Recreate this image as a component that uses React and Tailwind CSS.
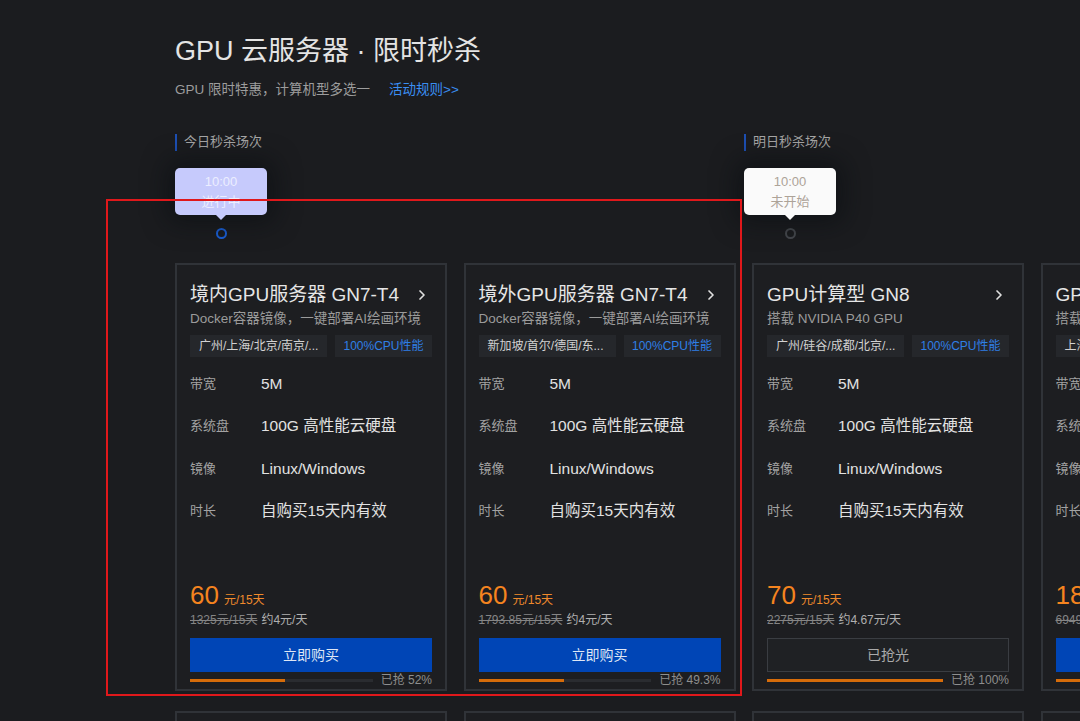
import React from 'react';
import { ChevronRight } from 'lucide-react';

const FONT = { fontFamily: '"Liberation Sans", "Noto Sans CJK SC", sans-serif' };

const cards = [
  {
    title: '境内GPU服务器 GN7-T4',
    desc: 'Docker容器镜像，一键部署AI绘画环境',
    region: '广州/上海/北京/南京/...',
    price: '60',
    old: '1325元/15天',
    daily: '约4元/天',
    pct: 52,
    pctText: '52%',
    soldOut: false,
  },
  {
    title: '境外GPU服务器 GN7-T4',
    desc: 'Docker容器镜像，一键部署AI绘画环境',
    region: '新加坡/首尔/德国/东...',
    price: '60',
    old: '1793.85元/15天',
    daily: '约4元/天',
    pct: 49.3,
    pctText: '49.3%',
    soldOut: false,
  },
  {
    title: 'GPU计算型 GN8',
    desc: '搭载 NVIDIA P40 GPU',
    region: '广州/硅谷/成都/北京/...',
    price: '70',
    old: '2275元/15天',
    daily: '约4.67元/天',
    pct: 100,
    pctText: '100%',
    soldOut: true,
  },
  {
    title: 'GPU计算型 GN10Xp',
    desc: '搭载 NVIDIA V100 GPU',
    region: '上海/北京/广州/南京/...',
    price: '188',
    old: '6949元/15天',
    daily: '约12.5元/天',
    pct: 40,
    pctText: '40%',
    soldOut: false,
  },
];

const specs = [
  ['带宽', '5M'],
  ['系统盘', '100G 高性能云硬盘'],
  ['镜像', 'Linux/Windows'],
  ['时长', '自购买15天内有效'],
];

const Card = ({ c }) => (
  <div className="w-[272px] h-[428px] shrink-0 border-2 border-[#303338] bg-[#1d1e21] px-[13px] pt-[17px] pb-[1px] flex flex-col overflow-hidden">
    <div className="flex items-center justify-between h-[26px]">
      <span className="text-[19px] text-[#e6e6e6] whitespace-nowrap">{c.title}</span>
      <ChevronRight className="w-[16px] h-[16px] text-[#e0e0e0] mr-[2px] shrink-0" strokeWidth={2.5} />
    </div>
    <div className="mt-[1px] h-[20px] leading-[20px] text-[13.5px] text-[#9b9b9b] whitespace-nowrap">{c.desc}</div>
    <div className="flex gap-[8px] mt-[6px]">
      <div className="w-[137px] h-[22px] shrink-0 bg-[#25272b] text-[12px] text-[#d2d2d2] flex items-center px-[9px] whitespace-nowrap overflow-hidden">
        {c.region}
      </div>
      <div className="w-[97px] h-[22px] shrink-0 bg-[#25272b] text-[12px] text-[#2f7fe6] flex items-center justify-center whitespace-nowrap">
        100%CPU性能
      </div>
    </div>
    <div className="mt-[5px] flex flex-col">
      {specs.map(([k, v]) => (
        <div key={k} className="h-[42.5px] flex items-center">
          <span className="w-[71px] text-[13px] text-[#a3a3a3]">{k}</span>
          <span className="text-[15.5px] text-[#e2e2e2] whitespace-nowrap">{v}</span>
        </div>
      ))}
    </div>
    <div className="mt-auto">
      <div className="flex items-baseline gap-[5px] h-[30px]">
        <span className="text-[26px] leading-[30px] text-[#f5841f]">{c.price}</span>
        <span className="text-[12px] text-[#f08a2c]">元/15天</span>
      </div>
      <div className="h-[20px] flex items-center text-[12px] gap-[4px] whitespace-nowrap">
        <span className="line-through text-[#858585]">{c.old}</span>
        <span className="text-[#b0b0b0]">{c.daily}</span>
      </div>
      {c.soldOut ? (
        <div className="mt-[8px] h-[34px] border border-[#3a3d42] bg-[#1f2124] text-[14px] text-[#aaaaaa] flex items-center justify-center">
          已抢光
        </div>
      ) : (
        <div className="mt-[8px] h-[34px] bg-[#0045b6] text-[14px] text-[#dfe6f5] flex items-center justify-center">
          立即购买
        </div>
      )}
      <div className="h-[16px] flex items-center gap-[8px]">
        <div className="flex-1 h-[3px] bg-[#2a2c30]">
          <div className="h-full bg-[#d66c0a]" style={{ width: `${c.pct}%` }} />
        </div>
        <span className="text-[12px] text-[#8e8e8e] whitespace-nowrap">已抢 {c.pctText}</span>
      </div>
    </div>
  </div>
);

const Bubble = ({ time, label, active }) => (
  <div className="flex flex-col items-center w-[92px]">
    <div
      className={`relative w-[92px] h-[47px] rounded-[5px] flex flex-col items-center justify-center text-[13px] leading-[20px] shadow-[0_0_24px_8px_rgba(10,12,16,0.55)] ${
        active ? 'bg-[#c6cafc] text-[#eceeff]' : 'bg-[#fafafa] text-[#ada398]'
      }`}
    >
      <span>{time}</span>
      <span>{label}</span>
      <div
        className={`absolute left-1/2 -bottom-[5px] -ml-[5px] w-0 h-0 border-l-[5px] border-r-[5px] border-t-[5px] border-l-transparent border-r-transparent ${
          active ? 'border-t-[#c6cafc]' : 'border-t-[#fafafa]'
        }`}
      />
    </div>
    <div
      className={`mt-[13px] w-[11px] h-[11px] rounded-full border-2 ${
        active ? 'border-[#1a5fd6]' : 'border-[#45484d]'
      }`}
    />
  </div>
);

const SectionLabel = ({ children }) => (
  <div className="flex items-center h-[18px]">
    <div className="w-[2px] h-[17px] bg-[#1d4fb3]" />
    <span className="ml-[7px] text-[13px] text-[#a6a6a6]">{children}</span>
  </div>
);

export default function App() {
  return (
    <div className="relative w-[1080px] h-[721px] overflow-hidden bg-[#1b1c1f]" style={FONT}>
      <div className="pl-[175px] pt-[32px]">
        <h1 className="text-[27px] leading-[38px] text-[#e4e4e4] whitespace-nowrap">GPU 云服务器 · 限时秒杀</h1>
        <div className="mt-[11px] flex items-center text-[13.5px] h-[18px]">
          <span className="text-[#9d9d9d]">GPU 限时特惠，计算机型多选一</span>
          <span className="ml-[19px] text-[#3a8ef2]">活动规则&gt;&gt;</span>
        </div>

        <div className="mt-[34px] flex">
          <div className="w-[569px] flex flex-col">
            <SectionLabel>今日秒杀场次</SectionLabel>
            <div className="mt-[17px]">
              <Bubble time="10:00" label="进行中" active />
            </div>
          </div>
          <div className="flex flex-col">
            <SectionLabel>明日秒杀场次</SectionLabel>
            <div className="mt-[17px]">
              <Bubble time="10:00" label="未开始" />
            </div>
          </div>
        </div>

        <div className="mt-[24px] flex gap-[16.5px]">
          {cards.map((c) => (
            <Card key={c.title} c={c} />
          ))}
        </div>
        <div className="mt-[20px] flex gap-[16.5px]">
          {cards.map((c) => (
            <div key={c.title} className="w-[272px] h-[428px] shrink-0 border-2 border-[#303338] bg-[#1d1e21]" />
          ))}
        </div>
      </div>

      {/* annotation frame */}
      <div className="pointer-events-none absolute left-[106px] top-[199px] w-[636px] h-[497px] border-2 border-[#e0181b]" />
    </div>
  );
}
